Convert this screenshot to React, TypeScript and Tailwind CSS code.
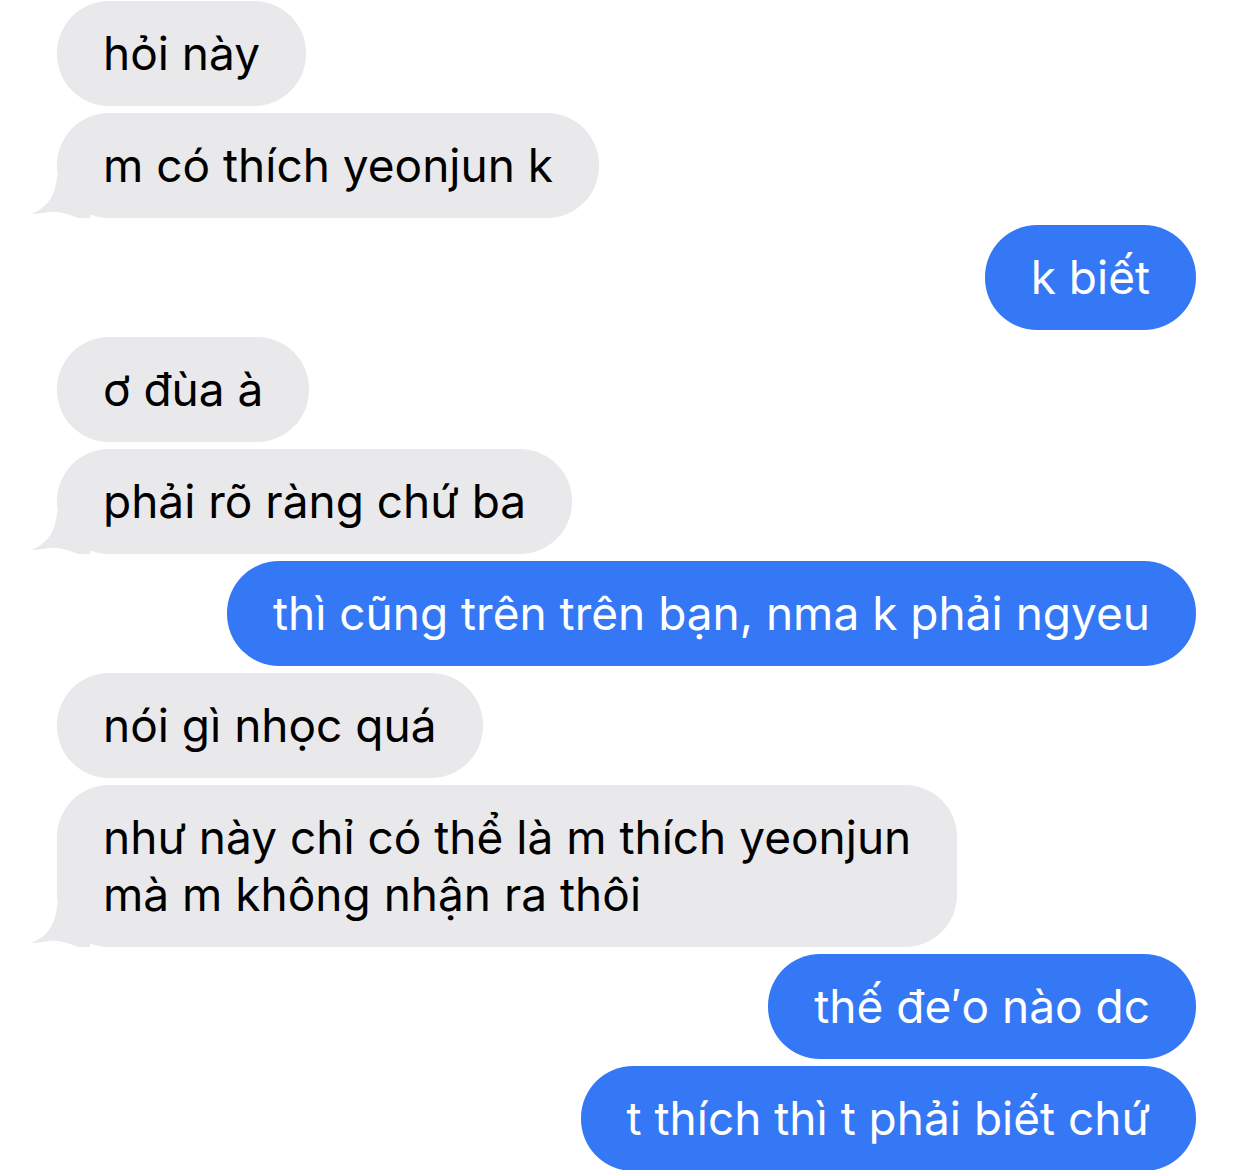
const messages: { text: string[]; me: boolean; tail?: boolean }[] = [
  { text: ["hỏi này"], me: false },
  { text: ["m có thích yeonjun k"], me: false, tail: true },
  { text: ["k biết"], me: true },
  { text: ["ơ đùa à"], me: false },
  { text: ["phải rõ ràng chứ ba"], me: false, tail: true },
  { text: ["thì cũng trên trên bạn, nma k phải ngyeu"], me: true },
  { text: ["nói gì nhọc quá"], me: false },
  { text: ["như này chỉ có thể là m thích yeonjun", "mà m không nhận ra thôi"], me: false, tail: true },
  { text: ["thế đe′o nào dc"], me: true },
  { text: ["t thích thì t phải biết chứ"], me: true },
];

function Tail() {
  return (
    <svg
      className="absolute left-[-27px] bottom-0"
      width="60"
      height="50"
      viewBox="0 0 60 50"
    >
      <path
        d="M0 46 C14 42 26 30 27 8 L60 8 L60 50 L48 50 C38 46 28 43 20 44 C12 45 6 46 0 46 Z"
        fill="#E9E9EB"
      />
    </svg>
  );
}

export default function App() {
  return (
    <div
      className="min-h-screen bg-white pt-[1px] pl-[57px] pr-[46px] overflow-hidden h-[1170px]"
      style={{ fontFamily: "Inter, 'Noto Sans', sans-serif" }}
    >
      <div className="flex flex-col gap-[7px]">
        {messages.map((m, i) => (
          <div key={i} className={m.me ? "flex justify-end" : "flex justify-start"}>
            <div
              className={
                "relative rounded-[52px] px-[46px] py-[24px] text-[46px] leading-[57px] " +
                (m.me ? "bg-[#3478F6] text-white" : "bg-[#E9E9EB] text-black")
              }
            >
              {m.tail && <Tail />}
              <div className="relative">
                {m.text.map((t, j) => (
                  <div key={j} className="whitespace-nowrap">{t}</div>
                ))}
              </div>
            </div>
          </div>
        ))}
      </div>
    </div>
  );
}
